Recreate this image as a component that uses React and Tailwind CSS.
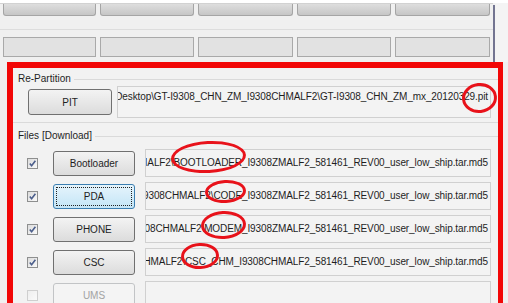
import React from "react";

const path = "C:\\Users\\Admin\\Desktop\\GT-I9308_CHN_ZM_I9308CHMALF2\\";

const rows = [
  {
    label: "Bootloader",
    checked: true,
    file: path + "BOOTLOADER_I9308ZMALF2_581461_REV00_user_low_ship.tar.md5",
    ring: "left-[25px] -top-[9px] w-[75px] h-[32px] -rotate-3",
  },
  {
    label: "PDA",
    checked: true,
    focused: true,
    file: path + "CODE_I9308ZMALF2_581461_REV00_user_low_ship.tar.md5",
    ring: "left-[59px] -top-[3px] w-[41px] h-[23px] -rotate-3",
  },
  {
    label: "PHONE",
    checked: true,
    file: path + "MODEM_I9308ZMALF2_581461_REV00_user_low_ship.tar.md5",
    ring: "left-[55px] -top-[5px] w-[45px] h-[28px] -rotate-3",
  },
  {
    label: "CSC",
    checked: true,
    file: path + "CSC_CHM_I9308CHMALF2_581461_REV00_user_low_ship.tar.md5",
    ring: "left-[35px] -top-[6px] w-[38px] h-[26px] -rotate-3",
  },
  { label: "UMS", checked: false, disabled: true, file: "" },
];

const tabWidths = ["w-[93px]", "w-[94px]", "w-[95px]", "w-[94px]", "w-[95px]"];

function CheckBox({ checked, disabled }) {
  return (
    <div
      className={`w-[11px] h-[11px] border flex items-center justify-center bg-gradient-to-br from-[#dcdcdc] to-[#fafafa] ${
        disabled ? "border-[#cfcfcf] from-[#eeeeee]" : "border-[#8e8f8f]"
      }`}
    >
      {checked && (
        <svg width="9" height="9" viewBox="0 0 9 9">
          <path d="M1.8 4.6 L3.6 6.8 L7.4 1.8" fill="none" stroke="#4c5f8c" strokeWidth="1.6" />
        </svg>
      )}
    </div>
  );
}

// red marker ellipse drawn over the path box
function Ring({ cls }) {
  return <span className={`absolute rounded-[50%] border-[3px] border-[#e8121a] ${cls}`}></span>;
}

export default function App() {
  return (
    <div
      className="w-[508px] h-[303px] overflow-hidden bg-[#f0f0f0] text-[#1e1e1e]"
      style={{ fontFamily: '"Liberation Sans", Arial, sans-serif' }}
    >
      {/* top window strip */}
      <div className="h-[3px] bg-white"></div>
      <div className="flex h-[59px]">
        <div className="w-[493px] border-t border-[#d2d2d2]">
          <div className="flex h-[12px] pl-[3px] gap-[4px]">
            {tabWidths.map((w, i) => (
              <div
                key={i}
                className={`${w} h-full rounded-b-[3px] border border-t-0 border-[#a5a5a5] bg-gradient-to-b from-[#dedede] to-[#c6c6c6]`}
              ></div>
            ))}
          </div>
          <div className="h-[13px]"></div>
          <div className="h-px bg-[#dddddd]"></div>
          <div className="flex h-[20px] mt-[7px] pl-[3px] gap-[4px]">
            {tabWidths.map((w, i) => (
              <div key={i} className={`${w} h-full border border-[#a9a9a9] bg-[#e2e2e2]`}></div>
            ))}
          </div>
        </div>
        <div className="w-[2px] mt-[2px] bg-[#737591]"></div>
        <div className="flex-1 bg-[#f4f4f4]"></div>
      </div>

      {/* Odin panel with red highlight */}
      <div className="ml-[7px] w-[496px] h-[260px] border-[6px] border-b-0 border-r-[5px] border-[#f20707] bg-[#f2f2f2] text-[10px]">
        {/* Re-Partition group */}
        <div className="mt-[5px] h-[12px] flex items-center pl-[5px]">
          <span className="leading-[12px]">Re-Partition</span>
          <div className="flex-1 ml-[3px] border-t border-[#dadada]"></div>
        </div>
        <div className="mt-[1px] flex pl-[15px]">
          <div className="mt-[3px] w-[84px] h-[26px] rounded-[3px] border border-[#707070] bg-gradient-to-b from-[#f3f3f3] to-[#dcdcdc] flex items-center justify-center">
            PIT
          </div>
          <div className="relative ml-[5px] w-[374px] h-[32px] border border-[#d0d0d0] bg-[#f3f3f3]">
            <div className="absolute inset-0 overflow-hidden flex justify-end pt-[4px] pr-[2px] whitespace-nowrap tracking-[-0.1px] leading-[12px]">
              <span className="shrink-0">{path}GT-I9308_CHN_ZM_mx_20120329.pit</span>
            </div>
            <Ring cls="left-[344px] -top-[4px] w-[35px] h-[30px] -rotate-6" />
          </div>
        </div>
        <div className="mt-[4px] border-t border-[#dadada]"></div>

        {/* Files group */}
        <div className="mt-[7px] h-[12px] flex items-center pl-[5px]">
          <span className="leading-[12px]">Files [Download]</span>
          <div className="flex-1 ml-[3px] border-t border-[#dadada]"></div>
        </div>
        <div className="mt-[7px] flex flex-col gap-[5px]">
          {rows.map((r) => (
            <div key={r.label} className="flex items-center h-[28px] pl-[14px]">
              <CheckBox checked={r.checked} disabled={r.disabled} />
              <div
                className={`ml-[15px] w-[82px] h-[25px] rounded-[3px] border flex items-center justify-center ${
                  r.focused
                    ? "border-[#3c7fb1] bg-gradient-to-b from-[#e5f4fc] to-[#c4e5f6] p-[2px]"
                    : r.disabled
                    ? "border-[#c2c4c6] bg-[#f4f4f4] text-[#a3a3a3]"
                    : "border-[#707070] bg-gradient-to-b from-[#f3f3f3] to-[#dcdcdc]"
                }`}
              >
                {r.focused ? (
                  <div className="w-full h-full border border-dotted border-[#222] flex items-center justify-center">
                    {r.label}
                  </div>
                ) : (
                  r.label
                )}
              </div>
              <div className="relative ml-[10px] w-[346px] h-[28px] border border-[#d0d0d0] bg-[#f3f3f3]">
                <div className="absolute inset-0 overflow-hidden flex items-center justify-end pr-[2px] whitespace-nowrap tracking-[-0.1px] leading-[12px]">
                  <span className="shrink-0">{r.file}</span>
                </div>
                {r.ring && <Ring cls={r.ring} />}
              </div>
            </div>
          ))}
        </div>
      </div>
    </div>
  );
}
